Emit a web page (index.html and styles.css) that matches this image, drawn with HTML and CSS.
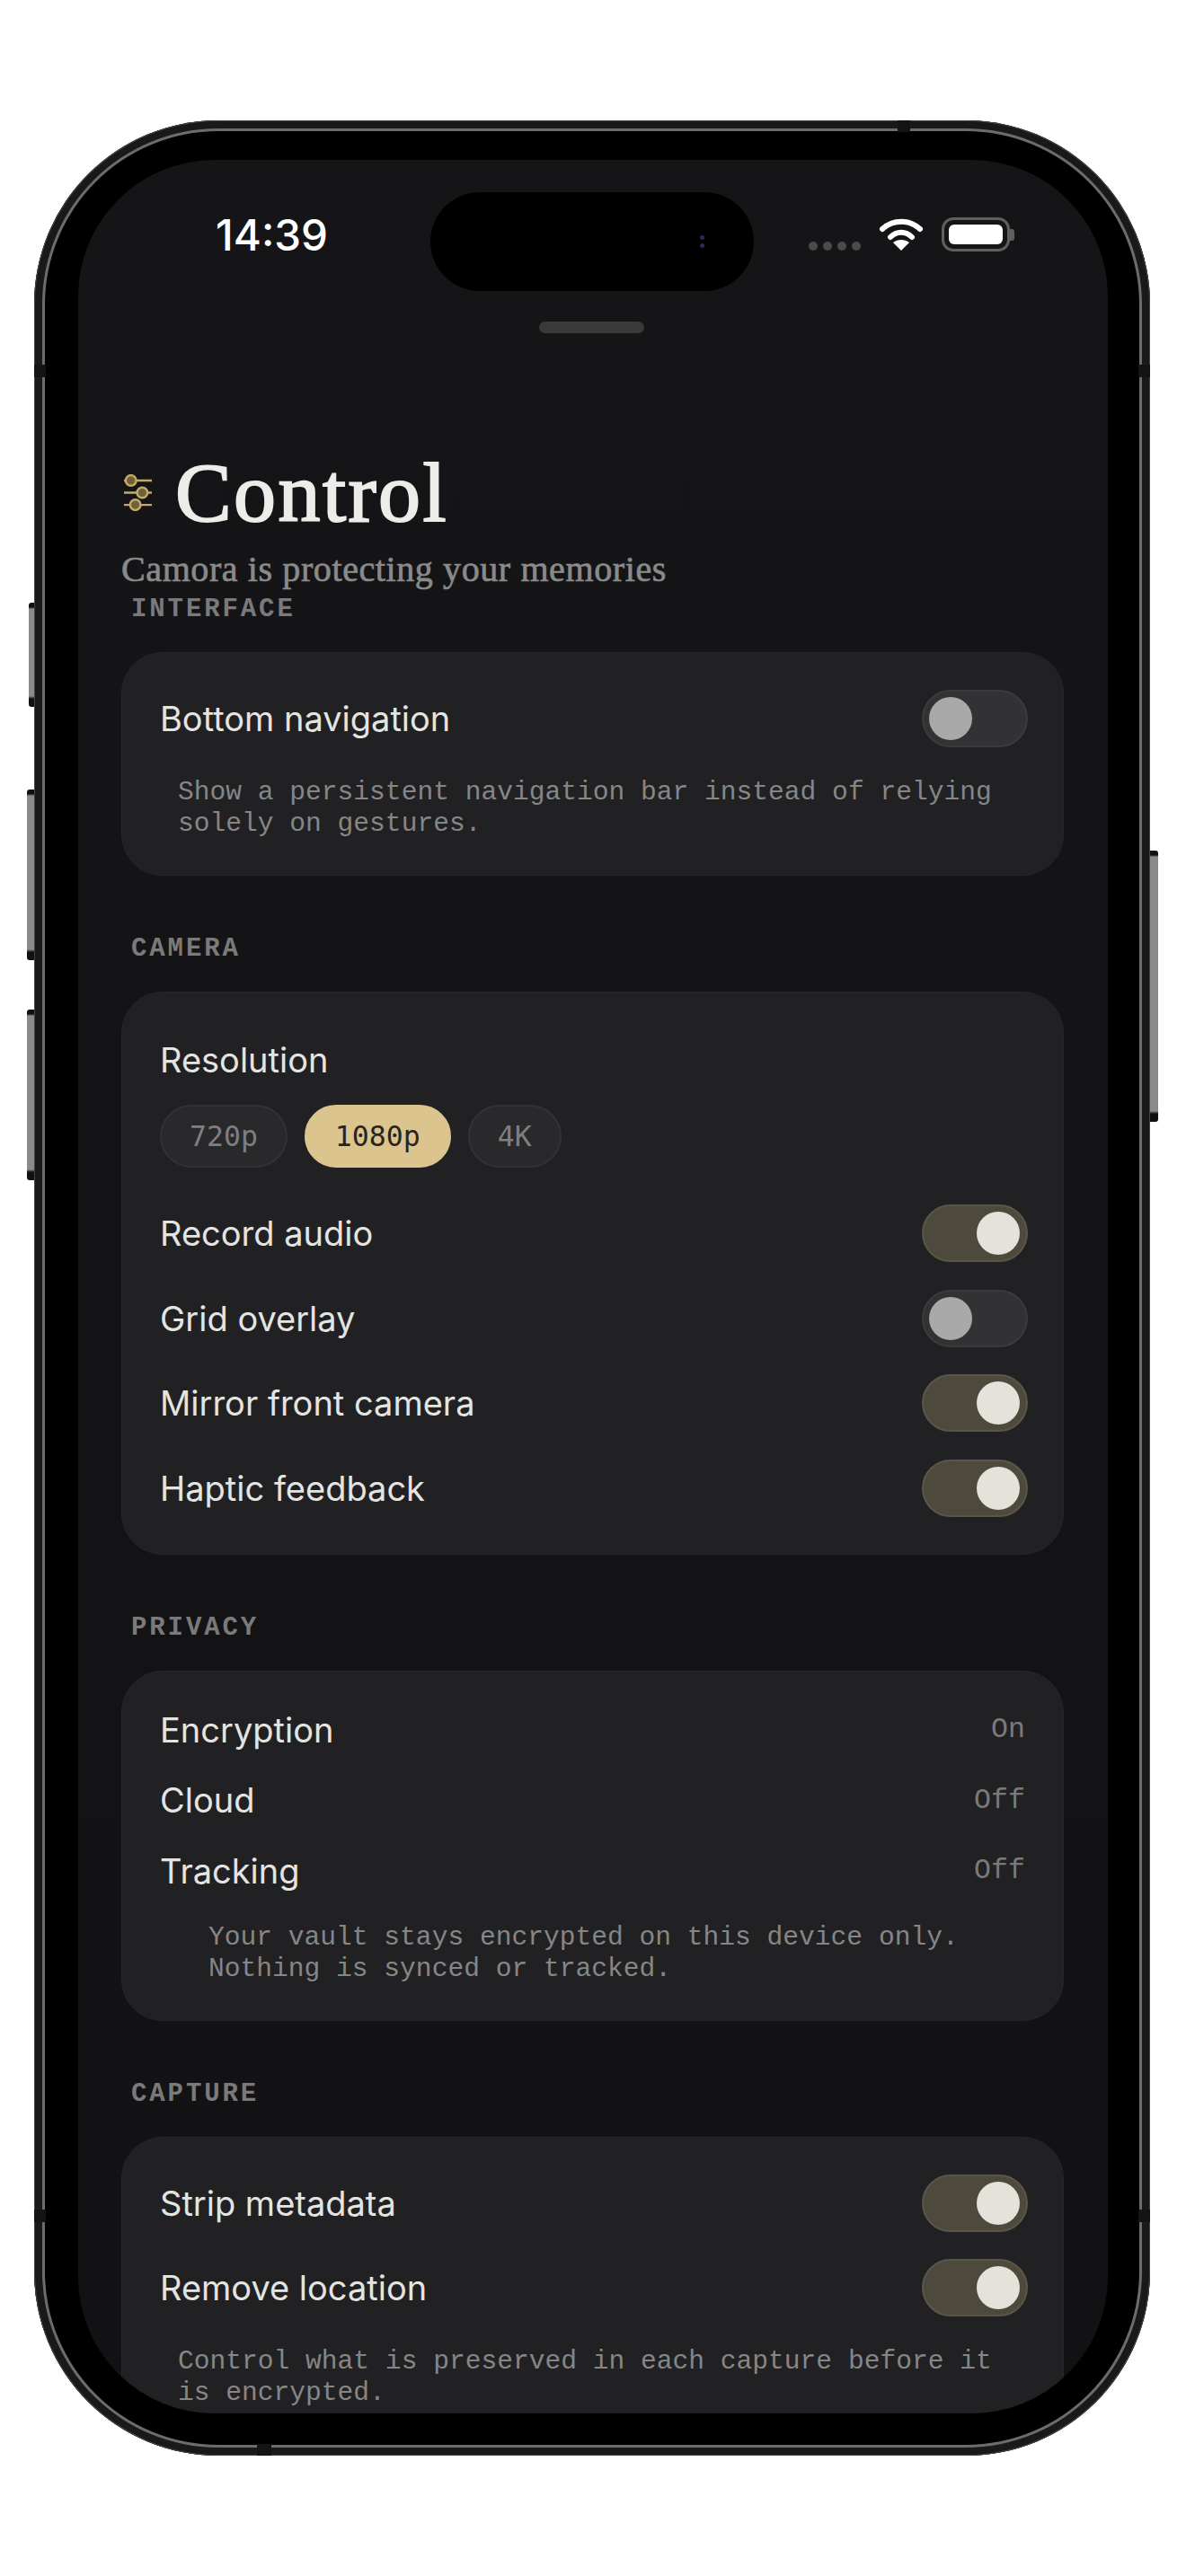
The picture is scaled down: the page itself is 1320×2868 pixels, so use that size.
FILE: index.html
```html
<!DOCTYPE html>
<html lang="en">
<head>
    <meta charset="UTF-8">
    <meta name="viewport" content="width=device-width, initial-scale=1.0">
    <title>Camora Control</title>
    <link rel="stylesheet" href="styles.css">
</head>
<body>
    <div class="phone">
        <span class="side-btn btn-mute"></span>
        <span class="side-btn btn-up"></span>
        <span class="side-btn btn-down"></span>
        <span class="side-btn btn-power"></span>
        <span class="band band-top"></span>
        <span class="band band-bottom"></span>
        <span class="band band-left1"></span>
        <span class="band band-right1"></span>
        <span class="band band-left2"></span>
        <span class="band band-right2"></span>

        <div class="screen">
            <div class="status">
                <div class="time">14:39</div>
                <div class="island"><span class="cam-dot"></span><span class="cam-dot"></span></div>
                <div class="signal"><i></i><i></i><i></i><i></i></div>
                <svg class="wifi" viewBox="0 0 50 37">
                    <path d="M4 13C16 2 34 2 46 13" fill="none" stroke="#fff" stroke-width="6" stroke-linecap="round"/>
                    <path d="M13 22C20 15 30 15 37 22" fill="none" stroke="#fff" stroke-width="6" stroke-linecap="round"/>
                    <path d="M25 37L16 28C21 24 29 24 34 28Z" fill="#fff"/>
                </svg>
                <div class="battery"><div class="battery-fill"></div></div>
                <div class="battery-nub"></div>
            </div>

            <div class="handle"></div>

            <div class="title-row">
                <svg class="title-icon" viewBox="0 0 34 42">
                    <g stroke="#c4a968" stroke-width="2.5" fill="none">
                        <path d="M1 7H33M1 21H33M1 35H33"/>
                        <circle cx="9" cy="7" r="6" fill="#6f6138"/>
                        <circle cx="22" cy="21" r="6" fill="#6f6138"/>
                        <circle cx="14" cy="35" r="6" fill="#6f6138"/>
                    </g>
                </svg>
                <h1>Control</h1>
            </div>
            <p class="subtitle">Camora is protecting your memories</p>

            <h2 class="section-label">INTERFACE</h2>
            <div class="card">
                <div class="row">
                    <span>Bottom navigation</span>
                    <div class="toggle"><div class="knob"></div></div>
                </div>
                <p class="note">Show a persistent navigation bar instead of relying solely on gestures.</p>
            </div>

            <h2 class="section-label gap">CAMERA</h2>
            <div class="card camera">
                <div class="row">
                    <span>Resolution</span>
                </div>
                <div class="chips">
                    <div class="chip">720p</div>
                    <div class="chip active">1080p</div>
                    <div class="chip">4K</div>
                </div>
                <div class="rows">
                    <div class="row">
                        <span>Record audio</span>
                        <div class="toggle on"><div class="knob"></div></div>
                    </div>
                    <div class="row">
                        <span>Grid overlay</span>
                        <div class="toggle"><div class="knob"></div></div>
                    </div>
                    <div class="row">
                        <span>Mirror front camera</span>
                        <div class="toggle on"><div class="knob"></div></div>
                    </div>
                    <div class="row">
                        <span>Haptic feedback</span>
                        <div class="toggle on"><div class="knob"></div></div>
                    </div>
                </div>
            </div>

            <h2 class="section-label gap">PRIVACY</h2>
            <div class="card">
                <div class="info-rows">
                    <div class="info-row"><span>Encryption</span><span class="value">On</span></div>
                    <div class="info-row"><span>Cloud</span><span class="value">Off</span></div>
                    <div class="info-row"><span>Tracking</span><span class="value">Off</span></div>
                </div>
                <p class="note wide">Your vault stays encrypted on this device only. Nothing is synced or tracked.</p>
            </div>

            <h2 class="section-label gap">CAPTURE</h2>
            <div class="card">
                <div class="rows">
                    <div class="row">
                        <span>Strip metadata</span>
                        <div class="toggle on"><div class="knob"></div></div>
                    </div>
                    <div class="row">
                        <span>Remove location</span>
                        <div class="toggle on"><div class="knob"></div></div>
                    </div>
                </div>
                <p class="note">Control what is preserved in each capture before it is encrypted.</p>
            </div>
        </div>
    </div>
</body>
</html>
```

FILE: styles.css
```css
* {
    box-sizing: border-box;
}

body {
    margin: 0;
    padding: 134px 0 0 38px;
    height: 2868px;
    background-color: #fff;
    font-family: Inter, "Liberation Sans", sans-serif;
    overflow: hidden;
}

/* device frame */
.phone {
    position: relative;
    width: 1242px;
    height: 2600px;
    padding: 44px 47px 47px 49px;
    background-color: #000;
    border-radius: 205px;
    box-shadow: inset 0 0 0 1px #444, inset 0 0 0 9px #191919, inset 0 0 0 12px #6c6c6c;
}

.side-btn {
    position: absolute;
    background: linear-gradient(to bottom, #111 0, #111 5px, #8a8a8a 7px, #8a8a8a calc(100% - 12px), #111 calc(100% - 9px), #111 100%);
    border-radius: 3px 0 0 3px;
}

.btn-mute { left: -6px; top: 537px; width: 6px; height: 116px; }
.btn-up { left: -8px; top: 745px; width: 8px; height: 190px; }
.btn-down { left: -8px; top: 990px; width: 8px; height: 190px; }
.btn-power { right: -9px; top: 813px; width: 9px; height: 302px; border-radius: 0 3px 3px 0; }

.band {
    position: absolute;
    background-color: #141414;
}

.band-top { left: 961px; top: 0; width: 14px; height: 13px; }
.band-bottom { left: 248px; bottom: 0; width: 16px; height: 13px; }
.band-left1 { left: 0; top: 272px; width: 13px; height: 14px; }
.band-right1 { right: 0; top: 272px; width: 13px; height: 14px; }
.band-left2 { left: 0; top: 2326px; width: 13px; height: 14px; }
.band-right2 { right: 0; top: 2326px; width: 13px; height: 14px; }

.screen {
    height: 100%;
    padding: 0 49px 0 48px;
    background: linear-gradient(#151517, #121214);
    border-radius: 152px;
    overflow: hidden;
}

/* status bar */
.status {
    display: flex;
    align-items: flex-start;
    height: 146px;
    padding-top: 36px;
    margin-left: 105px;
}

.time {
    width: 239px;
    margin-top: 20px;
    font-size: 47.5px;
    line-height: 56px;
    font-weight: 500;
    color: #fff;
}

.island {
    display: flex;
    flex-direction: column;
    align-items: flex-end;
    justify-content: center;
    gap: 4px;
    width: 360px;
    height: 110px;
    padding-right: 55px;
    background-color: #000;
    border-radius: 55px;
}

.cam-dot {
    width: 5px;
    height: 5px;
    border-radius: 50%;
    background-color: #2b2a55;
}

.signal {
    display: flex;
    gap: 6px;
    margin: 55px 20px 0 61px;
}

.signal i {
    width: 10px;
    height: 10px;
    border-radius: 50%;
    background-color: #4a4a4a;
}

.wifi {
    width: 50px;
    height: 37px;
    margin-top: 28px;
    margin-right: 20px;
}

.battery {
    width: 76px;
    height: 38px;
    margin-top: 28px;
    padding: 5px;
    border: 3px solid #5f5f5f;
    border-radius: 13px;
}

.battery-fill {
    height: 100%;
    background-color: #fff;
    border-radius: 6px;
}

.battery-nub {
    width: 5px;
    height: 13px;
    margin-top: 41px;
    background-color: #5f5f5f;
    border-radius: 0 3px 3px 0;
}

.handle {
    width: 117px;
    height: 13px;
    margin: 34px 0 0 465px;
    background-color: #3a3a3b;
    border-radius: 7px;
}

/* header */
.title-row {
    display: flex;
    align-items: center;
    gap: 25px;
    margin-top: 127px;
    padding-left: 2px;
}

.title-icon {
    width: 33px;
    height: 41px;
}

h1 {
    margin: 0;
    font-family: "Liberation Serif", serif;
    font-size: 94px;
    line-height: 100px;
    font-weight: 400;
    letter-spacing: 2.4px;
    color: #ecece8;
    -webkit-text-stroke: 2px #ecece8;
}

.subtitle {
    margin: 11px 0 0;
    font-family: "Liberation Serif", serif;
    font-size: 40px;
    line-height: 50px;
    letter-spacing: 0.6px;
    color: #8a8a8a;
    -webkit-text-stroke: 0.7px #8a8a8a;
}

.section-label {
    margin: 2px 0 29px 11px;
    font-family: "Liberation Mono", monospace;
    font-size: 29px;
    line-height: 36px;
    font-weight: 700;
    letter-spacing: 2.9px;
    color: #7a7a7a;
}

.section-label.gap {
    margin-top: 64px;
}

/* cards */
.card {
    padding: 41px 39px 39px 42px;
    background-color: #212123;
    border: 1px solid #262628;
    border-radius: 46px;
    color: #e4e4e0;
    font-size: 38px;
}

.card.camera {
    padding-top: 43px;
    padding-bottom: 41px;
}

.row {
    display: flex;
    justify-content: space-between;
    align-items: center;
    height: 64px;
}

.rows {
    display: flex;
    flex-direction: column;
    gap: 30.5px;
}

.note {
    margin: 33px 0 0;
    padding-left: 20px;
    font-family: "Liberation Mono", monospace;
    font-size: 29.6px;
    line-height: 35px;
    color: #868686;
}

.note.wide {
    padding-left: 54px;
}

/* toggles */
.toggle {
    display: flex;
    align-items: center;
    width: 118px;
    height: 64px;
    padding: 0 7px 0 6px;
    background-color: #323234;
    border: 2px solid #3b3b3d;
    border-radius: 32px;
}

.knob {
    width: 48px;
    height: 48px;
    background-color: #a9a9a9;
    border-radius: 50%;
}

.toggle.on {
    justify-content: flex-end;
    background-color: #4e493d;
    border-color: #5a5649;
}

.toggle.on .knob {
    background-color: #e3e3db;
}

/* resolution chips */
.chips {
    display: flex;
    gap: 19px;
    margin: 18px 0 41px;
}

.chip {
    height: 70px;
    padding: 0 31px;
    background-color: #29292b;
    border: 2px solid #323234;
    border-radius: 35px;
    font-family: "DejaVu Sans Mono", monospace;
    font-size: 31.5px;
    line-height: 66px;
    color: #7f7f7f;
}

.chip.active {
    padding: 0 32px;
    background-color: #dcc48f;
    border-color: #dcc48f;
    color: #29251c;
}

/* privacy rows */
.info-rows {
    display: flex;
    flex-direction: column;
    gap: 30.5px;
}

.info-row {
    display: flex;
    justify-content: space-between;
    align-items: center;
    height: 48px;
}

.value {
    margin-right: 3px;
    font-family: "Liberation Mono", monospace;
    font-size: 31.6px;
    color: #7a7a7a;
}
```
